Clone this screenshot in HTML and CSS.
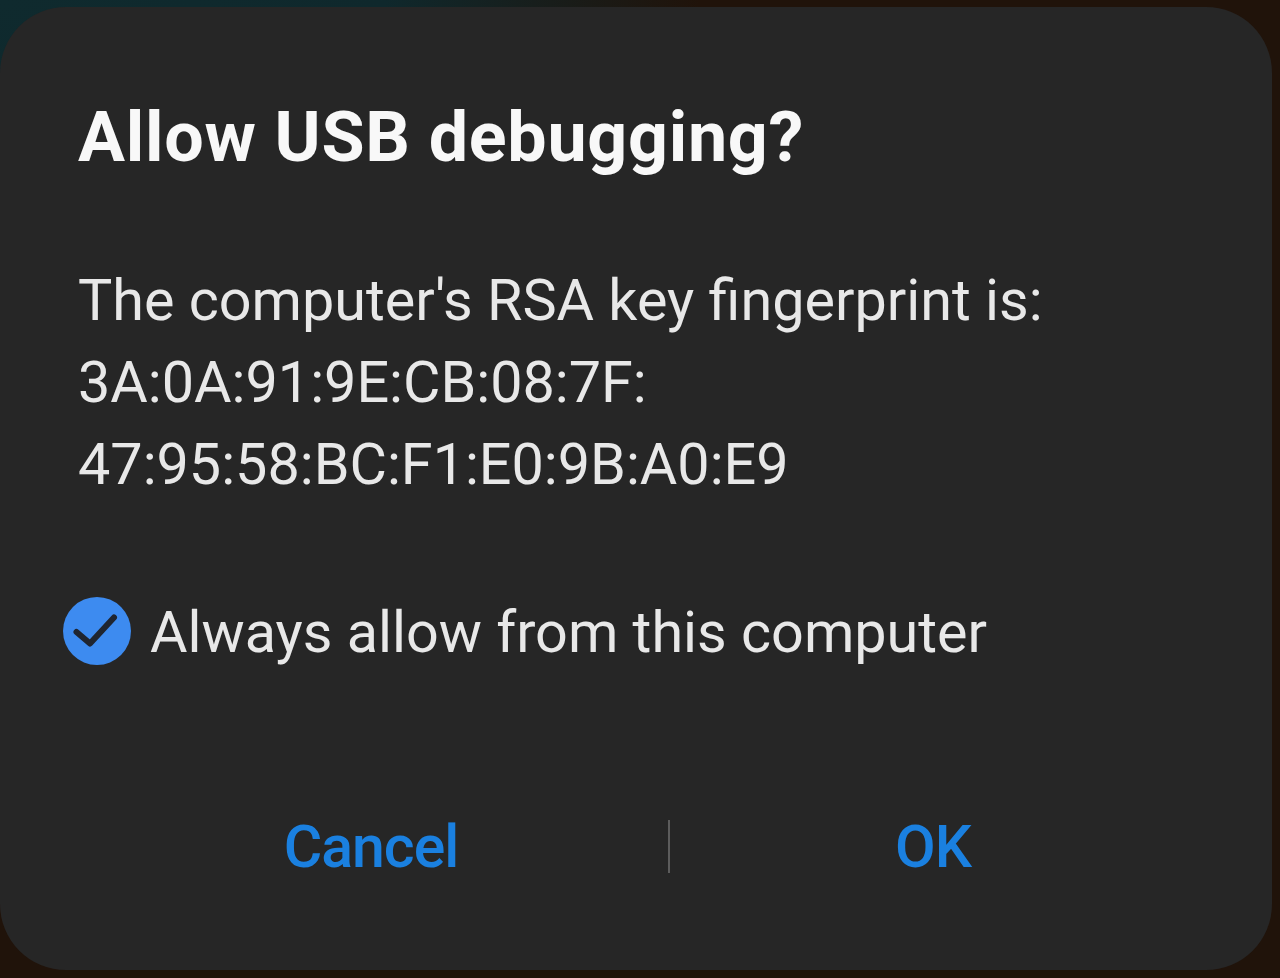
FILE: index.html
```html
<!DOCTYPE html>
<html lang="en">
<head>
<meta charset="utf-8">
<title>Allow USB debugging?</title>
<link rel="stylesheet" href="styles.css">
</head>
<body>
<div class="screen">
  <div class="dialog">
    <h1 class="title">Allow USB debugging?</h1>
    <p class="message">The computer's RSA key fingerprint is:<br>3A:0A:91:9E:CB:08:7F:<br>47:95:58:BC:F1:E0:9B:A0:E9</p>
    <label class="check-row">
      <span class="check">
        <svg viewBox="0 0 70 70" width="70" height="70" aria-hidden="true">
          <circle cx="35" cy="35" r="34" fill="#3d8bf0"/>
          <path d="M14.5 36 L28 47.5 L52 21.5" fill="none" stroke="#1f2530" stroke-width="6" stroke-linecap="round" stroke-linejoin="round"/>
        </svg>
      </span>
      <span class="check-label">Always allow from this computer</span>
    </label>
    <div class="actions">
      <button class="btn btn-cancel">Cancel</button>
      <span class="divider"></span>
      <button class="btn btn-ok">OK</button>
    </div>
  </div>
</div>
</body>
</html>
```

FILE: styles.css
```css
html, body {
  margin: 0;
  padding: 0;
}

body {
  width: 1280px;
  height: 978px;
  overflow: hidden;
  background:
    radial-gradient(ellipse 700px 300px at 0 0, #0f2a2e 0%, #0f282c 55%, rgba(15,40,44,0) 100%),
    #20130a;
  font-family: Roboto, "Liberation Sans", sans-serif;
}

.screen {
  padding-top: 7px;
  width: 1272px;
}

.dialog {
  box-sizing: border-box;
  width: 1272px;
  height: 963px;
  background: #262626;
  border-radius: 66px;
  padding: 89px 0 0 78px;
}

.title {
  margin: 0;
  font-size: 70px;
  line-height: 82px;
  font-weight: 700;
  color: #f8f8f8;
  letter-spacing: 0.7px;
}

.message {
  margin: 82px 0 0 0;
  font-size: 57.5px;
  line-height: 82px;
  font-weight: 400;
  color: #e8e8e8;
}

.check-row {
  display: flex;
  align-items: center;
  gap: 18px;
  margin: 90px 0 0 -16px;
  height: 70px;
}

.check {
  display: block;
  width: 70px;
  height: 70px;
}

.check svg {
  display: block;
}

.check-label {
  font-size: 57.5px;
  line-height: 70px;
  color: #e8e8e8;
  padding-top: 4px;
}

.actions {
  display: grid;
  grid-template-columns: 594px 2px 526px;
  align-items: center;
  margin: 154px 0 0 -4px;
  height: 53px;
}

.btn {
  background: none;
  border: 0;
  padding: 0;
  font-family: Roboto, "Liberation Sans", sans-serif;
  font-size: 59px;
  font-weight: 500;
  line-height: 53px;
  color: #1a80e0;
  text-align: center;
  letter-spacing: -1px;
}

.divider {
  display: block;
  width: 2px;
  height: 53px;
  background: #5c5c5c;
}
```
